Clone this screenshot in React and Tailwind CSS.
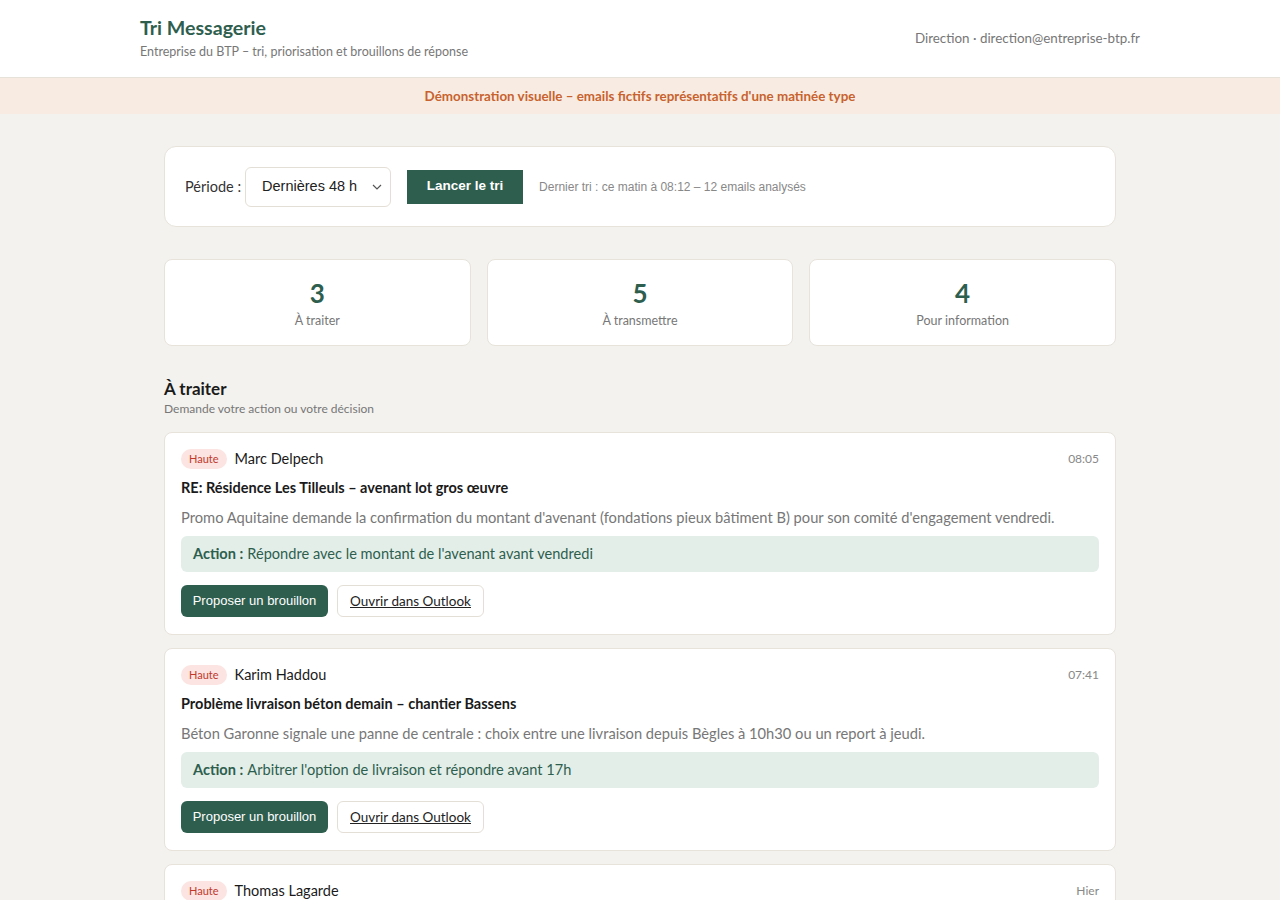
import { useState } from 'react';

const emails = [
  {
    from: 'Marc Delpech',
    time: '08:05',
    subject: 'RE: Résidence Les Tilleuls – avenant lot gros œuvre',
    summary:
      "Promo Aquitaine demande la confirmation du montant d'avenant (fondations pieux bâtiment B) pour son comité d'engagement vendredi.",
    action: "Répondre avec le montant de l'avenant avant vendredi"
  },
  {
    from: 'Karim Haddou',
    time: '07:41',
    subject: 'Problème livraison béton demain – chantier Bassens',
    summary:
      'Béton Garonne signale une panne de centrale : choix entre une livraison depuis Bègles à 10h30 ou un report à jeudi.',
    action: "Arbitrer l'option de livraison et répondre avant 17h"
  },
  {
    from: 'Thomas Lagarde',
    time: 'Hier',
    subject: 'Validation planning phase 2 – Lormont',
    summary: 'Le bureau de contrôle attend votre accord sur le planning révisé de la phase 2.',
    action: 'Valider le planning révisé'
  }
];

const stats = [
  { value: 3, label: 'À traiter' },
  { value: 5, label: 'À transmettre' },
  { value: 4, label: 'Pour information' }
];

const font = { fontFamily: 'Lato, "Noto Sans", sans-serif' };
const arial = { fontFamily: '"Liberation Sans", Arial, sans-serif' };

export default function App() {
  const [period, setPeriod] = useState('48');

  return (
    <div className="min-h-screen bg-[#f3f2ee] text-[#1f1f1f]" style={font}>
      {/* Header */}
      <header className="bg-white border-b border-[#e6e2da]">
        <div className="max-w-[1000px] mx-auto h-[77px] flex items-center justify-between">
          <div>
            <h1 className="text-[19.6px] font-bold text-[#2e5e4e] leading-6 mt-[1px]">Tri Messagerie</h1>
            <p className="text-[12.5px] text-[#777] mt-[3px]">
              Entreprise du BTP – tri, priorisation et brouillons de réponse
            </p>
          </div>
          <div className="text-[13.4px] text-[#777]">Direction · direction@entreprise-btp.fr</div>
        </div>
      </header>

      {/* Banner */}
      <div className="bg-[#f8ece2] h-[36px] flex items-center justify-center text-[13.4px] font-bold text-[#c8622e]">
        Démonstration visuelle – emails fictifs représentatifs d'une matinée type
      </div>

      <main className="max-w-[952px] mx-auto pt-[32px] pb-10">
        {/* Controls */}
        <div className="bg-white border border-[#e7e3db] rounded-xl h-[81px] px-5 flex items-center">
          <label className="text-[14.5px] text-[#333] mr-1">Période :</label>
          <div className="relative">
            <select
              value={period}
              onChange={(e) => setPeriod(e.target.value)}
              className="appearance-none h-[40px] w-[146px] border border-[#e4dfd6] rounded-md bg-white pl-4 pr-8 text-[14.5px] text-[#222]"
              style={arial}
            >
              <option value="24">Dernières 24 h</option>
              <option value="48">Dernières 48 h</option>
              <option value="72">Dernière semaine</option>
            </select>
            <svg className="absolute right-[9px] top-[16px] pointer-events-none" width="10" height="8" viewBox="0 0 10 8">
              <path d="M1 2l4 4 4-4" fill="none" stroke="#555" strokeWidth="1.2" />
            </svg>
          </div>
          <button className="ml-4 h-[34px] w-[116px] bg-[#2e5e4e] text-white text-[13.5px] font-bold" style={arial}>
            Lancer le tri
          </button>
          <span className="ml-4 text-[12px] text-[#888]" style={arial}>
            Dernier tri : ce matin à 08:12 – 12 emails analysés
          </span>
        </div>

        {/* Stats */}
        <div className="grid grid-cols-3 gap-4 mt-[32px]">
          {stats.map((s) => (
            <div key={s.label} className="bg-white border border-[#e7e3db] rounded-lg h-[87px] flex flex-col items-center justify-center">
              <div className="text-[26px] font-bold text-[#2e5e4e] leading-8">{s.value}</div>
              <div className="text-[12.5px] text-[#777] mt-[4px] leading-4">{s.label}</div>
            </div>
          ))}
        </div>

        {/* Section */}
        <h2 className="text-[17px] font-bold text-[#1a1a1a] mt-[31px] leading-6">À traiter</h2>
        <p className="text-[12px] text-[#777] leading-4">Demande votre action ou votre décision</p>

        <div className="mt-[15px] flex flex-col gap-[13px]">
          {emails.map((m) => (
            <div key={m.from} className="bg-white border border-[#e7e3db] rounded-lg px-4 pt-[16px] pb-[17px]">
              <div className="flex items-center justify-between h-[20px]">
                <div className="flex items-center gap-2">
                  <span className="bg-[#fbe4e1] text-[#c0392b] text-[11px] rounded-full px-2 h-[20px] flex items-center">
                    Haute
                  </span>
                  <span className="text-[14.5px] text-[#1a1a1a] leading-5">{m.from}</span>
                </div>
                <span className="text-[12px] text-[#888] leading-5">{m.time}</span>
              </div>
              <div className="text-[14.5px] font-bold text-[#1a1a1a] mt-[9px] leading-5">{m.subject}</div>
              <p className="text-[14.7px] text-[#777] mt-[9px] leading-5">{m.summary}</p>
              <div className="bg-[#e3eee9] rounded-md h-[36px] flex items-center px-3 mt-[9px] text-[14.6px] text-[#2e5e4e]">
                <span className="font-bold mr-1">Action :</span>
                {m.action}
              </div>
              <div className="flex gap-[9px] mt-[13px]">
                <button className="h-[32px] w-[147px] bg-[#2e5e4e] text-white text-[13px] rounded-md" style={arial}>
                  Proposer un brouillon
                </button>
                <button className="h-[32px] px-3 bg-white border border-[#e4dfd6] rounded-md text-[13.5px] text-[#222] underline">
                  Ouvrir dans Outlook
                </button>
              </div>
            </div>
          ))}
        </div>
      </main>
    </div>
  );
}
